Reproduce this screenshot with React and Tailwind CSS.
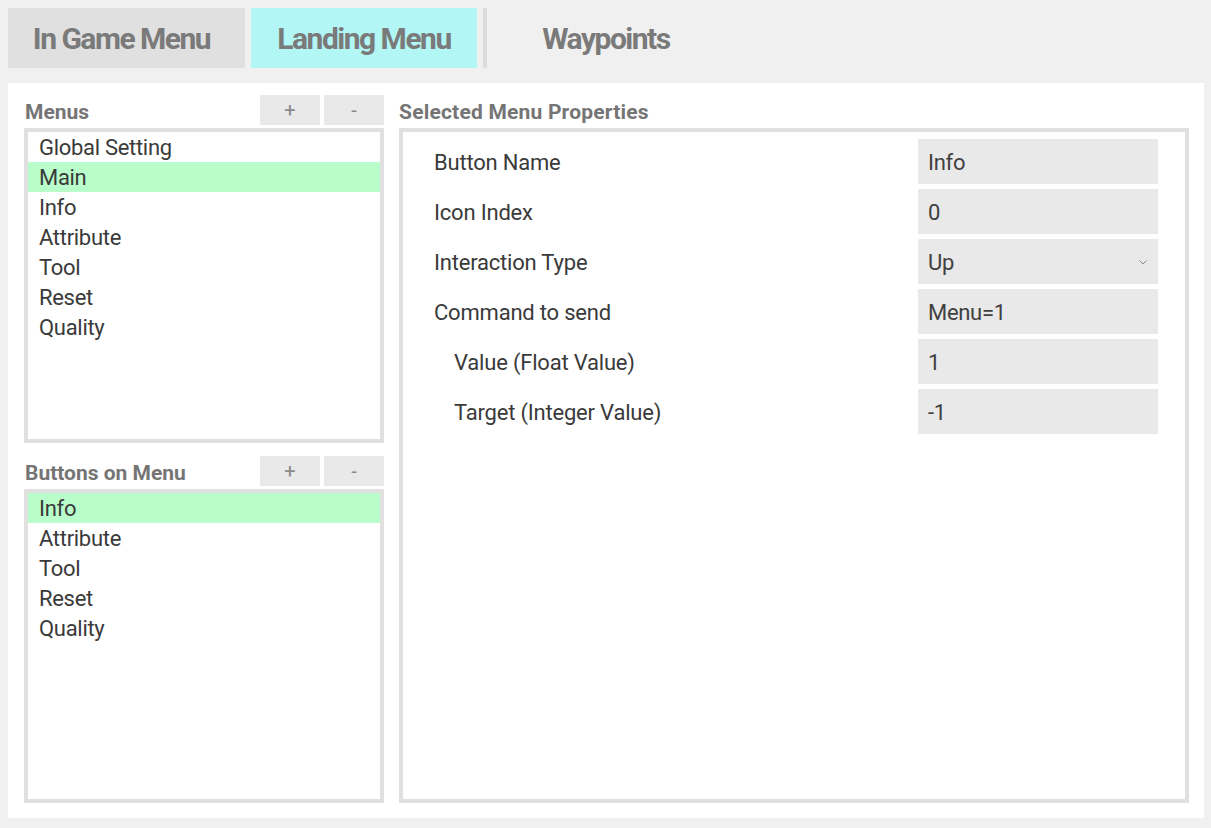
import { useState } from 'react'

const MENUS = ['Global Setting', 'Main', 'Info', 'Attribute', 'Tool', 'Reset', 'Quality']
const BUTTONS = ['Info', 'Attribute', 'Tool', 'Reset', 'Quality']

const PROPS = [
  { label: 'Button Name', value: 'Info' },
  { label: 'Icon Index', value: '0' },
  { label: 'Interaction Type', value: 'Up', select: true },
  { label: 'Command to send', value: 'Menu=1' },
  { label: 'Value (Float Value)', value: '1', sub: true },
  { label: 'Target (Integer Value)', value: '-1', sub: true },
]

const font = { fontFamily: 'Roboto, "Liberation Sans", sans-serif' }

function ListHeader({ title }) {
  return (
    <div className="flex h-[30px] items-end justify-between">
      <h3 className="pl-px text-[21px] font-bold leading-[26px] text-[#757575]">{title}</h3>
      <div className="flex gap-1 self-stretch">
        <button className="w-[60px] bg-[#e9e9e9] text-[20px] leading-none text-[#8a8a8a]">+</button>
        <button className="w-[60px] bg-[#e9e9e9] text-[20px] leading-none text-[#8a8a8a]">-</button>
      </div>
    </div>
  )
}

function ListBox({ items, selected, onPick }) {
  return (
    <div className="mt-[3px] flex-1 border-4 border-[#e0e0e0] bg-white">
      {items.map((item, i) => (
        <div
          key={item}
          onClick={() => onPick(i)}
          className={`h-[30px] pl-[11px] text-[22px] leading-[31px] tracking-[-0.3px] text-[#3a3a3a] ${i === selected ? 'bg-[#b9fdcb]' : ''}`}
        >
          {item}
        </div>
      ))}
    </div>
  )
}

export default function App() {
  const [tab, setTab] = useState(1)
  const [menu, setMenu] = useState(1)
  const [btn, setBtn] = useState(0)

  return (
    <div className="h-[828px] w-[1211px] bg-[#f0f0f0] px-2 pt-2" style={font}>
      <div className="flex h-[60px] items-stretch">
        <button
          onClick={() => setTab(0)}
          className={`w-[237px] pr-[10px] text-[30px] font-bold tracking-[-1.5px] text-[#7a7a7a] ${tab === 0 ? 'bg-[#b2f6f5]' : 'bg-[#e0e0e0]'}`}
        >
          In Game Menu
        </button>
        <button
          onClick={() => setTab(1)}
          className={`ml-1.5 w-[226px] text-[30px] font-bold tracking-[-1.5px] text-[#7a7a7a] ${tab === 1 ? 'bg-[#b2f6f5]' : 'bg-[#e0e0e0]'}`}
        >
          Landing Menu
        </button>
        <div className="ml-1.5 w-1 bg-[#dcdcdc]" />
        <button
          onClick={() => setTab(2)}
          className={`w-[238px] text-[30px] font-bold tracking-[-1.5px] text-[#7a7a7a] ${tab === 2 ? 'bg-[#b2f6f5]' : ''}`}
        >
          Waypoints
        </button>
      </div>

      <div className="mt-[15px] flex h-[735px] w-[1196px] gap-[15px] bg-white pb-[15px] pl-4 pr-[15px] pt-3">
        <div className="flex w-[360px] flex-col">
          <ListHeader title="Menus" />
          <ListBox items={MENUS} selected={menu} onPick={setMenu} />
          <div className="mt-[13px]">
            <ListHeader title="Buttons on Menu" />
          </div>
          <ListBox items={BUTTONS} selected={btn} onPick={setBtn} />
        </div>

        <div className="flex flex-1 flex-col">
          <div className="flex h-[30px] items-end">
            <h3 className="text-[21px] font-bold leading-[26px] tracking-[0.2px] text-[#757575]">Selected Menu Properties</h3>
          </div>
          <div className="mt-[3px] flex flex-1 flex-col gap-[5px] border-4 border-[#e0e0e0] pl-[31px] pr-[27px] pt-[7px]">
            {PROPS.map((p) => (
              <div key={p.label} className="flex h-[45px] items-center justify-between">
                <span className={`pt-px text-[22px] tracking-[-0.2px] text-[#3a3a3a] ${p.sub ? 'pl-5' : ''}`}>{p.label}</span>
                <div className="flex h-full w-[240px] items-center justify-between bg-[#e9e9e9] pl-[10px] pr-[11px] pt-px text-[22px] tracking-[-0.3px] text-[#404040]">
                  <span>{p.value}</span>
                  {p.select && (
                    <svg width="8" height="5" viewBox="0 0 8 5" fill="none">
                      <path d="M0.5 0.5l3.5 3.5 3.5-3.5" stroke="#8a8a8a" strokeWidth="1" />
                    </svg>
                  )}
                </div>
              </div>
            ))}
          </div>
        </div>
      </div>
    </div>
  )
}
